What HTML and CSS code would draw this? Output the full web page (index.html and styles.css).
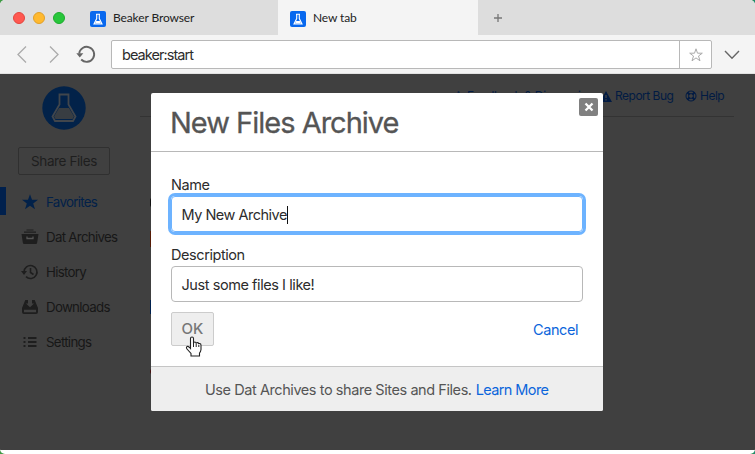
FILE: index.html
```html
<!DOCTYPE html>
<html lang="en">
<head>
<meta charset="utf-8">
<title>Beaker Browser</title>
<link rel="stylesheet" href="styles.css">
</head>
<body>
<svg class="defs" width="0" height="0"><defs>
<symbol id="flask" viewBox="0 0 16 16"><rect width="16" height="16" rx="2" fill="#0868ee"/><path d="M6 3.2h4M6.700 3.500v4L4 12.900h8L9.300 7.500v-4" fill="none" stroke="#fff" stroke-width="1.100"/><path d="M6.200 10h3.600l1 2H5.200z" fill="#fff"/></symbol>
</defs></svg>
<div class="window">
  <header class="tabs">
    <div class="lights"><i class="red"></i><i class="yellow"></i><i class="green"></i></div>
    <div class="tab"><svg width="16" height="16"><use href="#flask"/></svg><span class="t-beaker">Beaker Browser</span></div>
    <div class="tab active"><svg width="16" height="16"><use href="#flask"/></svg><span class="t-new">New tab</span></div>
    <div class="plus"><svg width="8" height="8" viewBox="0 0 8 8"><path d="M4 0v8M0 4h8" stroke="#777" stroke-width="1.300"/></svg></div>
  </header>
  <nav class="toolbar">
    <svg class="navicons" width="111" height="38" viewBox="0 0 111 38" fill="none"><path d="M26 11.500l-8 8 8 8M50 11.500l8 8-8 8" stroke="#aaa" stroke-width="1.300"/><path d="M79.200 18.500a7.500 7.500 0 1 1 2 6" stroke="#666" stroke-width="1.900"/><path d="M76.300 18.300h7l-3.500 4.300z" fill="#666"/></svg>
    <div class="address"><span class="url">beaker:start</span><div class="bookmark"><svg width="14" height="14" viewBox="0 0 14 14"><path d="M7 .8l1.500 4.400h4.800L9.500 8l1.500 4.800-4-2.900-4 2.900L4.500 8 .7 5.200h4.800z" fill="none" stroke="#aaa"/></svg></div></div>
    <svg class="chevron" width="16" height="10" viewBox="0 0 16 10"><path d="M1 1l7 7.200L15 1" fill="none" stroke="#666" stroke-width="1.400"/></svg>
  </nav>
  <main class="page">
    <aside>
      <svg class="logo" width="44" height="44" viewBox="0 0 44 44"><circle cx="22" cy="22" r="21.700" fill="#022249"/><path d="M17.500 8.500h9v10L33.500 30.500l-2.500 4.500h-18l-2.500-4.500 7-12z" fill="none" stroke="#41464c" stroke-width="1.800"/><path d="M17 22h10l5 8.500-1.500 2.500h-17L12 30.500z" fill="#383d42"/></svg>
      <div class="share"><span>Share Files</span></div>
      <ul>
        <li class="selected"><svg width="18" height="18" viewBox="0 0 18 18"><path d="M9 1.200l2 5.600h6l-4.800 3.600 1.800 5.800-5-3.500-5 3.500 1.800-5.800L1 6.800h6z"/></svg><span class="m1">Favorites</span></li>
        <li><svg width="18" height="18" viewBox="0 0 18 18"><path d="M5.500 1.500h7v1h-7zM3 3.500h12v1.200H3zM.5 6h17l-1.300 8.500q-.1 1.500-1.500 1.500H3.300q-1.400 0-1.500-1.500z"/><path d="M6 8.500v2h6v-2" fill="none" stroke="#555" stroke-width="1.300"/></svg><span class="m2">Dat Archives</span></li>
        <li><svg width="18" height="18" viewBox="0 0 18 18"><path d="M3 9a6.500 6.500 0 1 1 2 4.700M9.500 5v4.500l3 2" fill="none" stroke="#1e1e1e" stroke-width="1.600"/><path d="M0 8h6l-3 4z"/></svg><span class="m3">History</span></li>
        <li><svg width="18" height="18" viewBox="0 0 18 18"><path d="M4.300 2h2.700v3.500H5L9 9.200l4-3.700h-2V2h2.700L17 10H1z"/><path d="M1 10h16v4q0 2-2 2H3q-2 0-2-2zM3 11.800v2.400h12v-2.400z" fill-rule="evenodd"/></svg><span class="m4">Downloads</span></li>
        <li><svg width="18" height="18" viewBox="0 0 18 18"><path d="M2.500 5h2M7 5h8.500M2.500 9h2M7 9h8.500M2.500 13h2M7 13h8.500" stroke="#1e1e1e" stroke-width="1.800"/></svg><span class="m5">Settings</span></li>
      </ul>
    </aside>
    <section class="content">
      <div class="links"><span class="feedback">♙ Feedback &amp; Discussion</span><svg class="warn" width="12" height="11" viewBox="0 0 12 11"><path d="M6 0l6 11H0z" fill="#021b43"/><path d="M6 4v3M6 8.200v1.300" stroke="#444" stroke-width="1.300"/></svg><span class="report">Report Bug</span><svg class="helpicon" width="12" height="12" viewBox="0 0 12 12" fill="none" stroke="#021b43"><circle cx="6" cy="6" r="5"/><circle cx="6" cy="6" r="2.400"/><path d="M2.300 2.300l2.200 2.200M9.700 2.300L7.500 4.500M2.300 9.700l2.200-2.200M9.700 9.700L7.500 7.500" stroke-width="2.200"/></svg><span class="help">Help</span></div>
      <div class="marks"><i></i><i></i><i></i><i></i></div>
    </section>
  </main>
</div>
<div class="modal">
  <div class="title"><h1><span>New Files Archive</span></h1><button class="close" aria-label="Close"><svg width="10" height="10" viewBox="0 0 10 10"><path d="M1.500 1.500l7 7M8.500 1.500l-7 7" stroke="#fff" stroke-width="2.300"/></svg></button></div>
  <div class="form">
    <label><span class="l1">Name</span></label>
    <div class="input focused"><span class="v1">My New Archive</span><i class="caret"></i></div>
    <label class="second"><span class="l2">Description</span></label>
    <div class="input"><span class="v2">Just some files I like!</span></div>
    <div class="actions"><button class="ok"><span>OK</span></button><a><span class="cancel">Cancel</span></a></div>
  </div>
  <footer><span class="f1">Use Dat Archives to share Sites and Files.</span><a class="f2">Learn More</a></footer>
</div>
<svg class="cursor" width="18" height="22" viewBox="0 0 18 22"><path d="M5.500 12.500V2.500q0-1.500 1.500-1.500t1.500 1.500v5q0-1.500 1.300-1.500t1.400 1.700q.1-1.200 1.300-1.100t1.300 1.600q.3-1 1.200-.6 1 .4 1 1.900v4q-.2 2-1.500 3.500v3H6v-2.500L2 13q-1.200-2 .2-2.500 1.200-.5 3.300 2z" fill="#fff" stroke="#222" stroke-width="1.100"/><path d="M8.500 7v4M11.200 8v3M13.800 9v2" stroke="#222"/></svg>
</body>
</html>
```
FILE: styles.css
```css
* { box-sizing: border-box; }
html { background: linear-gradient(90deg, #3f9a45, #4da52f 99%, #1c8a70); height: 454px; }
body { margin: 0; width: 755px; height: 454px; overflow: hidden; font-family: Inter, "Liberation Sans", sans-serif; font-size: 14.5px; letter-spacing: -.43px; color: #2c2c2c; }
span, a { white-space: nowrap; }
.defs { position: absolute; }
.window { width: 755px; height: 454px; background: #fff; border-radius: 5px; overflow: hidden; }
.tabs { height: 35px; display: flex; background: #ddd; }
.lights { width: 78px; padding: 12px 0 0 13px; display: flex; gap: 8px; }
.lights i { width: 12px; height: 12px; border-radius: 50%; border: 1px solid; }
.lights .red { background: #ff5850; border-color: #e2463f; }
.lights .yellow { background: #ffb92f; border-color: #e0a02a; }
.lights .green { background: #28c63b; border-color: #1dab2d; }
.tab { width: 200px; padding: 0 12px; display: flex; align-items: center; gap: 7px; font: 12px Lato, sans-serif; letter-spacing: -.12px; color: #222; }
.tab svg { position: relative; top: 1px; }
.tab.active { background: #f4f4f4; }
.plus { padding: 14px 16px; }
.plus svg { display: block; }
.toolbar { height: 39px; background: #f4f4f4; border-bottom: 1px solid #e2e2e2; display: flex; align-items: flex-start; }
.navicons { width: 111px; flex: none; }
.address { width: 601px; height: 29px; margin-top: 5px; background: #fff; border: 1px solid #b8b8b8; border-radius: 2px; display: flex; align-items: center; justify-content: space-between; padding-left: 10px; }
.url { letter-spacing: -.95px; }
.bookmark { width: 32px; height: 27px; border-left: 1px solid #b8b8b8; display: flex; align-items: center; justify-content: center; }
.chevron { margin: 15px 0 0 12px; }
.page { height: 376px; background: #404040; display: flex; }
aside { width: 140px; }
.logo { display: block; margin: 12px 0 0 42px; }
.share { width: 92px; height: 28px; margin: 17px 0 0 18px; border: 1px solid #303030; border-radius: 2px; display: flex; align-items: center; justify-content: center; color: #1e1e1e; font-size: 13.5px; letter-spacing: -.4px; }
ul { list-style: none; margin: 12px 0 0; padding: 0; }
li { height: 28px; margin-bottom: 7px; padding: 1px 0 0 21px; display: flex; align-items: center; gap: 7px; color: #171717; fill: #1e1e1e; font-size: 13.3px; letter-spacing: -.7px; }
li.selected { border-left: 6px solid #00204d; padding-left: 15px; color: #022149; fill: #022149; }
.content { width: 594px; padding-top: 12px; }
.links { height: 31px; border-bottom: 1px solid #333; padding-left: 313px; display: flex; align-items: flex-start; color: #021b43; font-size: 12px; letter-spacing: -.5px; line-height: 20px; }
.feedback { width: 147px; overflow: hidden; letter-spacing: -.2px; }
.warn { margin: 5px 3px 0 0; }
.report { width: 70px; }
.helpicon { margin: 4px 3px 0 0; }
.marks { width: 12px; padding: 81px 0 0 10px; display: grid; row-gap: 24px; }
.marks i { width: 2px; height: 9px; background: #111; border-radius: 2px 0 0 2px; }
.marks i:nth-child(2) { height: 16px; background: #541b06; border-radius: 0; }
.marks i:nth-child(3) { margin-top: 29px; height: 14px; background: #00204d; border-radius: 0; }
.marks i:nth-child(4) { margin-top: 31px; height: 5px; background: #451010; }
.modal { position: absolute; left: 151px; top: 93px; width: 452px; height: 318px; background: #fff; border-radius: 2px; overflow: hidden; }
.title { height: 59px; border-bottom: 1px solid #b8b8b8; display: flex; justify-content: space-between; padding: 0 5px 0 19px; }
h1 { margin: 0; font-size: 29px; font-weight: 400; line-height: 59px; letter-spacing: -1px; color: #555; -webkit-text-stroke: .3px #555; }
.close { width: 19px; height: 18px; margin-top: 5px; border: 0; border-radius: 2px; background: #808080; padding: 0; display: flex; align-items: center; justify-content: center; }
.form { height: 214px; padding: 23px 20px 0; }
label { display: block; height: 20px; line-height: 20px; }
.input { height: 36px; border: 1px solid #b8b8b8; border-radius: 4px; padding: 1px 0 0 9.5px; display: flex; align-items: center; }
.input.focused { margin-top: 1px; border-color: #6db3ff; box-shadow: 0 0 0 3px #6db3ff; }
.v1 { letter-spacing: -.5px; }
.caret { width: 1px; height: 18px; background: #111; }
.second { margin-top: 13px; margin-bottom: 1px; }
.actions { margin-top: 10px; display: flex; justify-content: space-between; align-items: center; padding-right: 5px; }
.ok { width: 43px; height: 34px; padding: 0 0 2px; border: 1px solid #ccc; border-radius: 2px; background: #eee; color: #777; font: 500 15px Inter, sans-serif; }
a { color: #0b65db; }
footer { height: 45px; border-top: 1px solid #c5c5c5; background: #eee; display: flex; align-items: center; padding: 1px 0 0 54px; gap: 4px; color: #555; }
.f2 { letter-spacing: -.6px; }
.cursor { position: absolute; left: 185px; top: 336px; }
```
